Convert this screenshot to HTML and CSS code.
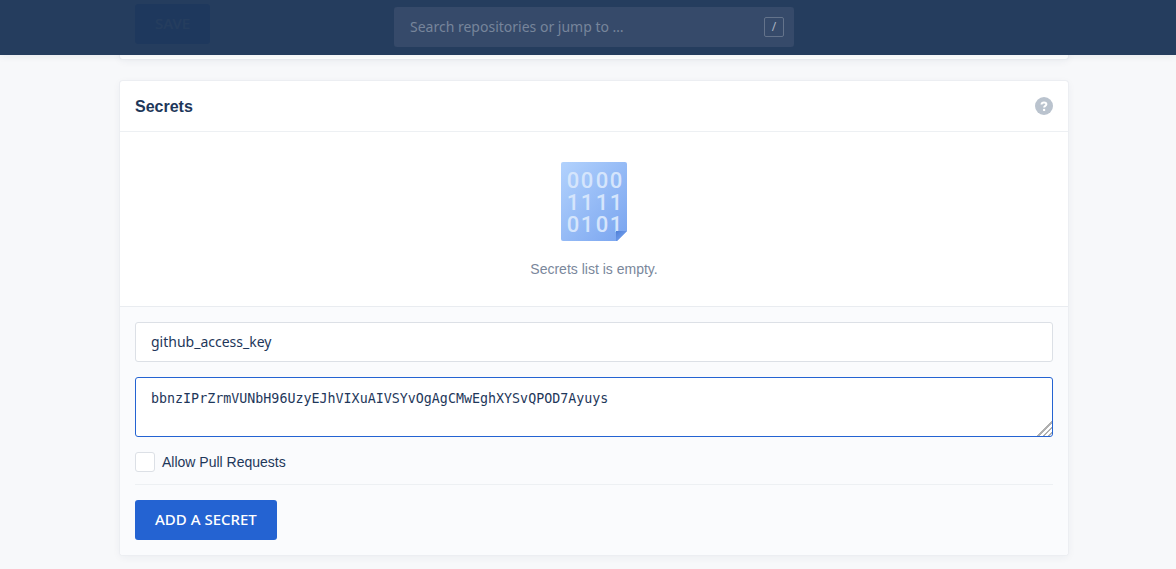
FILE: index.html
```
<!DOCTYPE html>
<html lang="en">
<head>
<meta charset="utf-8">
<title>Repository settings</title>
<link rel="stylesheet" href="styles.css">
</head>
<body>
<header class="topbar">
  <label class="search">
    <input class="search-input" type="text" placeholder="Search repositories or jump to …" aria-label="Search repositories">
    <kbd class="search-key">/</kbd>
  </label>
</header>
<main class="content">
  <section class="card card-general">
    <button class="button" type="button">SAVE</button>
  </section>
  <section class="card">
    <div class="card-head">
      <h2 class="card-title">Secrets</h2>
      <a class="help" href="#help" aria-label="Help">
        <svg width="18" height="18" viewBox="0 0 18 18"><circle cx="9" cy="9" r="9" fill="#bac3ce"/><path d="M6.5 7.5C6.6 6 7.7 5.4 9 5.4c1.5 0 2.4.8 2.4 1.9 0 1.6-2.3 1.5-2.3 3.2" fill="none" stroke="#fff" stroke-width="2"/><circle cx="9.1" cy="12.9" r="1.2" fill="#fff"/></svg>
      </a>
    </div>
    <div class="empty">
      <svg class="empty-art" width="66" height="79" viewBox="0 0 66 79">
        <defs>
          <linearGradient id="sheet" x1="0" y1="0" x2="1" y2="1"><stop offset="0" stop-color="#b2d2fd"/><stop offset="1" stop-color="#79a4ef"/></linearGradient>
          <linearGradient id="fold" x1="0" y1="0" x2="1" y2="1"><stop offset="0" stop-color="#4f7fd6"/><stop offset=".6" stop-color="#6d9aea"/></linearGradient>
        </defs>
        <path d="M2 0h62a2 2 0 0 1 2 2v67L56 79H2a2 2 0 0 1-2-2V2a2 2 0 0 1 2-2z" fill="url(#sheet)"/>
        <g class="bits">
          <text x="12 26 41 55" y="26">0000</text>
          <text x="12 26 41 55" y="48">1111</text>
          <text x="12 26 41 55" y="70">0101</text>
        </g>
        <path d="M55 69h11L56 79h-1z" fill="url(#fold)"/>
      </svg>
      <p class="empty-text">Secrets list is empty.</p>
    </div>
    <form class="form">
      <input class="field" type="text" value="github_access_key" aria-label="Secret name">
      <textarea class="field field-value" aria-label="Secret value" spellcheck="false">bbnzIPrZrmVUNbH96UzyEJhVIXuAIVSYvOgAgCMwEghXYSvQPOD7Ayuys</textarea>
      <label class="check"><input class="check-box" type="checkbox">Allow Pull Requests</label>
      <div class="actions"><button class="button" type="button">ADD A SECRET</button></div>
    </form>
  </section>
</main>
</body>
</html>
```
FILE: styles.css
```
* { box-sizing: border-box; }
body {
  margin: 0;
  padding-left: 12px;
  background: #f7f8fa;
  color: #1e375a;
  font: 14px/20px "Liberation Sans", Arial, sans-serif;
}
.topbar {
  position: fixed;
  inset: 0 0 auto;
  z-index: 1;
  display: flex;
  justify-content: center;
  padding: 7px 16px 8px 28px;
  background: rgba(30, 55, 89, .97);
  box-shadow: 0 0 8px rgba(30, 55, 90, .1);
}
.search {
  display: flex;
  align-items: center;
  width: 400px;
  height: 40px;
  padding: 0 10px 0 16px;
  border-radius: 3px;
  background: #364a6a;
}
.search-input {
  flex: 1;
  min-width: 0;
  padding: 0;
  border: 0;
  outline: 0;
  background: none;
  color: #fff;
  font: 14px/20px "Noto Sans", sans-serif;
}
.search-input::placeholder { color: #77859b; opacity: 1; }
.search-key {
  width: 20px;
  height: 20px;
  border: 1px solid #64738b;
  border-radius: 2px;
  color: #a8b2c1;
  font: 12px/17px "Noto Sans", sans-serif;
  text-align: center;
}
.content {
  display: flex;
  flex-direction: column;
  gap: 22px;
  max-width: 980px;
  margin: 0 auto;
  padding: 0 16px 14px;
}
.card {
  border-radius: 3px;
  background: #fff;
  box-shadow: 0 0 0 1px #eceef2, 0 2px 8px rgba(30, 55, 90, .06);
}
.card-general { padding: 4px 15px 15px; }
.card-head {
  display: flex;
  align-items: center;
  justify-content: space-between;
  height: 51px;
  padding: 0 15px;
  border-bottom: 1px solid #edf0f3;
}
.card-title { margin: 0; padding-top: 2px; font-size: 16px; line-height: 20px; }
.help { display: flex; }
.empty {
  display: flex;
  flex-direction: column;
  align-items: center;
  gap: 18px;
  padding: 30px 15px 27px;
}
.empty-text { margin: 0; color: #7a879b; }
.bits {
  fill: #d5e5fc;
  font: 500 22px Roboto, sans-serif;
  text-anchor: middle;
}
.form {
  display: flex;
  flex-direction: column;
  gap: 15px;
  padding: 15px;
  border-top: 1px solid #e9ecf0;
  border-radius: 0 0 3px 3px;
  background: #fafbfd;
}
.field {
  display: block;
  width: 100%;
  height: 40px;
  padding: 0 15px 2px;
  border: 1px solid #dce0e6;
  border-radius: 3px;
  outline: 0;
  background: #fff;
  color: #1e375a;
  font: 14px/20px "Noto Sans", sans-serif;
}
.field-value {
  height: 60px;
  padding: 11px 15px;
  border-color: #2463d2;
  font: revert;
  font-family: "DejaVu Sans Mono", monospace;
  line-height: 20px;
  resize: vertical;
}
.field-value::-webkit-resizer {
  background: linear-gradient(135deg, transparent 50%, #b0b0b0 50% 57%, transparent 57% 67%, #b0b0b0 67% 74%, transparent 74% 84%, #b0b0b0 84% 91%, transparent 91%);
}
.check { display: flex; align-items: center; gap: 7px; }
.check-box {
  width: 20px;
  height: 20px;
  margin: 0;
  border: 1px solid #dce0e6;
  border-radius: 3px;
  appearance: none;
  background: #fff;
}
.check-box:checked { background: #2463d2; }
.actions {
  margin-top: -3px;
  padding-top: 15px;
  border-top: 1px solid #edf0f3;
}
.button {
  display: block;
  height: 40px;
  padding: 0 20px 2px;
  border: 0;
  border-radius: 3px;
  background: #2463d2;
  color: #fff;
  font: 500 15px/20px "Noto Sans", sans-serif;
}
```
